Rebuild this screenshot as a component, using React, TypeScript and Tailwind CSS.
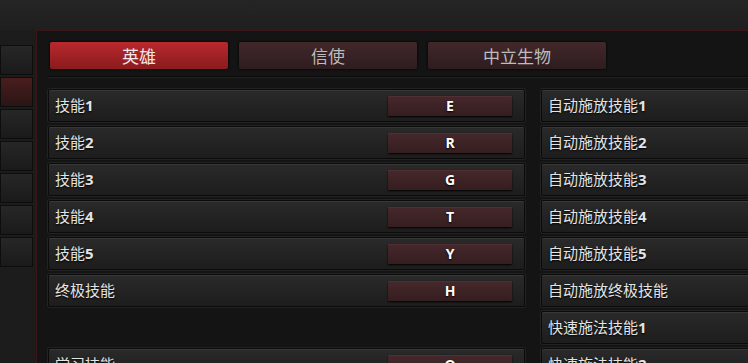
import React from 'react';

type Row = { label: string; num?: string; hotkey?: string } | null;

const leftRows: Row[] = [
    { label: '技能', num: '1', hotkey: 'E' },
    { label: '技能', num: '2', hotkey: 'R' },
    { label: '技能', num: '3', hotkey: 'G' },
    { label: '技能', num: '4', hotkey: 'T' },
    { label: '技能', num: '5', hotkey: 'Y' },
    { label: '终极技能', hotkey: 'H' },
    null,
    { label: '学习技能', hotkey: 'Q' },
];

const rightRows: Row[] = [
    { label: '自动施放技能', num: '1' },
    { label: '自动施放技能', num: '2' },
    { label: '自动施放技能', num: '3' },
    { label: '自动施放技能', num: '4' },
    { label: '自动施放技能', num: '5' },
    { label: '自动施放终极技能' },
    { label: '快速施法技能', num: '1' },
    { label: '快速施法技能', num: '2' },
];

const tabs = ['英雄', '信使', '中立生物'];

function BindRow({ row }: { row: Row }) {
    if (!row) {
        return <div className="h-[33px]" />;
    }
    return (
        <div className="h-[33px] flex items-center justify-between pl-[6px] rounded-[2px] border border-[#0b0b0b] bg-linear-to-b from-[#2a2a2a] to-[#1d1d1d] shadow-[inset_0_1px_0_#383838,0_0_0_1px_#222]">
            <span className="text-[15px] text-[#e4e4e4] [text-shadow:0_1px_2px_#000]">
                {row.label}
                {row.num && <span className="font-bold font-['Open_Sans',sans-serif] text-[15px]">{row.num}</span>}
            </span>
            {row.hotkey && (
                <div className="w-[124px] h-[20px] mr-[12px] flex items-center justify-center rounded-[1px] bg-linear-to-b from-[#46282b] to-[#351e20] shadow-[0_1px_2px_#000,inset_0_1px_0_#503033]">
                    <span className="text-[14px] font-bold text-white font-['Open_Sans',sans-serif] [text-shadow:0_1px_2px_#000]">
                        {row.hotkey}
                    </span>
                </div>
            )}
        </div>
    );
}

export default function App() {
    return (
        <div className="w-[748px] h-[363px] overflow-hidden bg-[#1c1c1c] bg-linear-to-b from-[#252525] to-[#1f1f1f] bg-no-repeat [background-size:100%_30px] flex font-['Noto_Sans_CJK_SC',sans-serif]">
            {/* side menu */}
            <div className="w-[36px] shrink-0 pt-[45px] flex flex-col gap-[2px]">
                {[0, 1, 2, 3, 4, 5, 6].map((i) => (
                    <div
                        key={i}
                        className={
                            i === 1
                                ? 'w-[33px] h-[30px] border border-[#0d0d0d] bg-linear-to-b from-[#4a1d1d] to-[#2a1515]'
                                : 'w-[33px] h-[30px] border border-[#0d0d0d] bg-linear-to-b from-[#272727] to-[#1a1a1a]'
                        }
                    />
                ))}
            </div>

            {/* main panel */}
            <div className="flex-1 pt-[30px]">
                <div className="h-full border-t border-l border-[#3a1616] bg-[#141414] pl-[11px] pt-[11px]">
                    <div className="flex gap-[11px] ml-[2px]">
                        {tabs.map((t, i) => (
                            <div
                                key={t}
                                className={
                                    i === 0
                                        ? 'w-[178px] h-[27px] flex items-center justify-center rounded-[2px] bg-linear-to-b from-[#b8292d] to-[#8a1b1e] shadow-[0_0_3px_#000] text-[17px] text-[#f2e6e6]'
                                        : 'w-[178px] h-[27px] flex items-center justify-center rounded-[2px] bg-linear-to-b from-[#42282b] to-[#2e1c1e] shadow-[0_0_3px_#000] text-[17px] text-[#bdbdbd]'
                                }
                            >
                                {t}
                            </div>
                        ))}
                    </div>
                    <div className="mt-[7px] h-[2px] border-t border-[#0a0a0a] border-b-[#222] border-b" />
                    <div className="mt-[11px] grid grid-cols-[477px_477px] gap-x-[16px] gap-y-[4px]">
                        {leftRows.map((row, i) => (
                            <React.Fragment key={i}>
                                <BindRow row={row} />
                                <BindRow row={rightRows[i]} />
                            </React.Fragment>
                        ))}
                    </div>
                </div>
            </div>
        </div>
    );
}
